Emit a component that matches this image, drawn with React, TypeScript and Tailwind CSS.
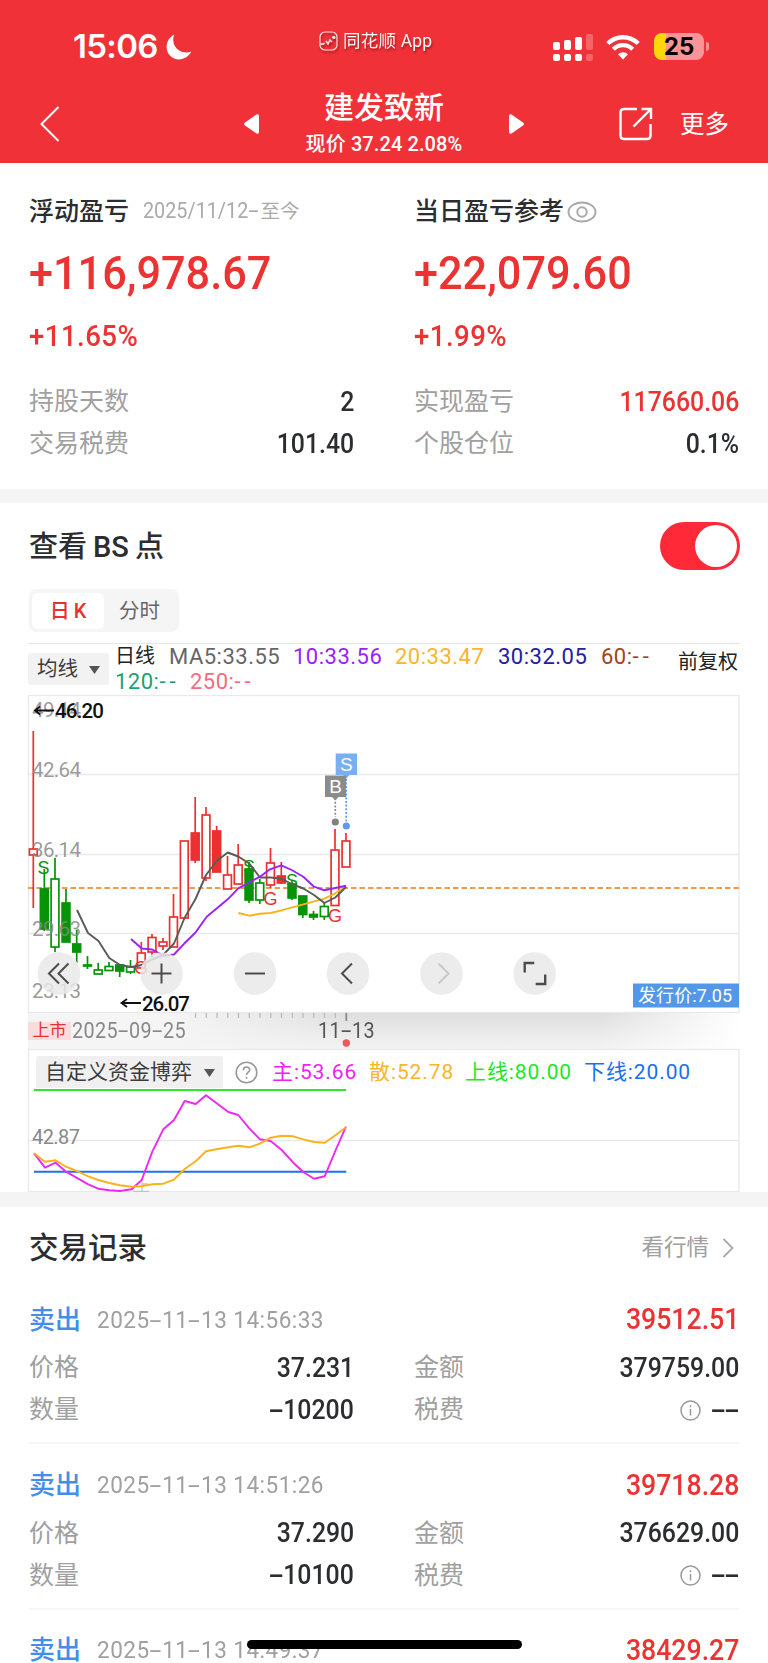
import type { ReactNode } from 'react'

type Trade = {
  time: string
  profit: string
  detail?: { price: string; amount: string; qty: string }
}

type Candle = {
  x: number
  high: number
  low: number
  top: number
  bottom: number
  up: boolean
  filled?: boolean
}

const RED = '#ec3031'
const GREEN = '#079307'

const trades: Trade[] = [
  {
    time: '2025-11-13 14:56:33',
    profit: '39512.51',
    detail: { price: '37.231', amount: '379759.00', qty: '-10200' },
  },
  {
    time: '2025-11-13 14:51:26',
    profit: '39718.28',
    detail: { price: '37.290', amount: '376629.00', qty: '-10100' },
  },
  { time: '2025-11-13 14:49:37', profit: '38429.27' },
]

const candles: Candle[] = [
  { x: 33.3, high: 731, low: 908, top: 849, bottom: 855, up: true },
  { x: 44.3, high: 869, low: 931, top: 889, bottom: 929, up: false, filled: true },
  { x: 55, high: 858, low: 952, top: 879, bottom: 947, up: false },
  { x: 66, high: 889, low: 942, top: 903, bottom: 942, up: false, filled: true },
  { x: 76.7, high: 930, low: 963, top: 944, bottom: 952, up: false, filled: true },
  { x: 87.5, high: 956, low: 969, top: 965, bottom: 966, up: false, filled: true },
  { x: 98.2, high: 963, low: 974, top: 970, bottom: 974, up: false },
  { x: 109, high: 962, low: 970, top: 966.5, bottom: 970.5, up: false },
  { x: 119.7, high: 964, low: 977, top: 965, bottom: 971, up: false, filled: true },
  { x: 130.5, high: 960, low: 974, top: 967, bottom: 972, up: false },
  { x: 141.3, high: 942, low: 968, top: 953, bottom: 968, up: true },
  { x: 152, high: 934, low: 957, top: 937.5, bottom: 952, up: true },
  { x: 163, high: 938, low: 950, top: 942, bottom: 946, up: true },
  { x: 173.5, high: 894, low: 947, top: 917, bottom: 947, up: true },
  { x: 184.3, high: 841, low: 918, top: 841, bottom: 918, up: true },
  { x: 195.2, high: 797, low: 863, top: 833, bottom: 860, up: true, filled: true },
  { x: 206, high: 807, low: 881, top: 815, bottom: 878, up: true },
  { x: 216.7, high: 826, low: 872, top: 831, bottom: 872, up: true, filled: true },
  { x: 227.5, high: 856, low: 889, top: 875, bottom: 889, up: true },
  { x: 238.2, high: 844, low: 884, top: 865, bottom: 884, up: true },
  { x: 249, high: 862, low: 903, top: 869, bottom: 900, up: false, filled: true },
  { x: 259.8, high: 879, low: 904, top: 883, bottom: 900, up: false },
  { x: 270.5, high: 848, low: 888, top: 863, bottom: 885, up: true },
  { x: 281.3, high: 862, low: 884, top: 876, bottom: 883, up: true, filled: true },
  { x: 292, high: 880, low: 900, top: 884, bottom: 898, up: false, filled: true },
  { x: 302.8, high: 896, low: 918, top: 896, bottom: 914.5, up: false, filled: true },
  { x: 313.5, high: 911, low: 920, top: 914.5, bottom: 917, up: false, filled: true },
  { x: 324.3, high: 903, low: 920, top: 906.5, bottom: 916.5, up: false },
  { x: 335, high: 829, low: 905, top: 850, bottom: 905.5, up: true },
  { x: 346, high: 833, low: 867, top: 841, bottom: 867, up: true },
]

const ma5 =
  '77,910 88,933 98.5,941 109.3,958 120,965 131.5,967 141.7,965 152,959.5 163,955 174,943.5 184.5,918 195.5,899 206,875 216.7,861 227.7,852.5 238.3,856.5 249.3,863.5 260,877.5 270.7,877.5 281.3,878.7 291.7,884 303.3,888.5 314,895 324.3,903 335.3,897.5 346,887'
const ma10 =
  '131,939 141.7,948.5 152.3,949.5 163.3,955.7 174,954.5 184.5,943.3 195.3,932.7 206.7,916.7 227.7,899.3 238.3,888.3 249.3,882.3 260,876.7 270,869.3 281.3,865.3 291.7,870 303.3,876.7 314,886.7 324.3,890.3 335.3,888 346,885.7'
const ma20 =
  '238.3,913 249.3,915.7 260,913.7 270.7,913 281.3,910.3 303.3,904.3 324.3,898.7 335.3,893.3 346,886'
const mainForce =
  '34,1153.3 45,1167.7 55.7,1162.7 66,1171.7 88.3,1184.3 98.3,1188.7 109.3,1190.3 120,1191 131.7,1189.3 141.7,1180 152.3,1151.7 163.3,1129.3 174,1120 184.7,1101 195.7,1104 206,1095.3 217.7,1104 228.3,1112 238.3,1115 249.3,1128.3 260,1139.3 270.7,1141 281.7,1150 293.3,1162.7 303.3,1172 314,1178.7 324.7,1176.3 335.7,1150 346,1126.7'
const retail =
  '34,1153.3 45,1161.7 55.7,1160.3 66,1166.7 76.7,1171 88.3,1176.3 98.3,1180 109.3,1183 120,1185.3 131.7,1186.7 141.7,1186.3 152.3,1184.3 163.3,1183.7 174,1179.7 184.7,1169 195.7,1161.3 206,1151.3 217.7,1149 228.3,1147.3 238.3,1145.7 249.3,1147.3 260,1143.7 270.7,1137.7 281.7,1135.7 293.3,1136.3 303.3,1139.3 314,1142 324.7,1142.7 335.7,1135 346,1127.3'

// Narrow numerals, hyphens are stretched to digit width
function Num({ children, className = '' }: { children: string; className?: string }) {
  return (
    <span className={`inline-block whitespace-pre scale-x-[0.92] ${className}`}>
      {children.split('-').map((part, i) => (
        <span key={i}>
          {i > 0 && <span className="inline-block w-[0.56em] scale-x-[1.9] text-center">-</span>}
          {part}
        </span>
      ))}
    </span>
  )
}

function StatusBar() {
  return (
    <div className="flex h-[84px] items-center pt-[9px] pl-[73px]">
      <span className="w-[86px] whitespace-nowrap font-['Inter'] text-[33px] font-semibold tracking-[-0.7px]">15:06</span>
      <svg className="ml-[7px] h-[26px] w-[26px]" viewBox="0 0 26 26" fill="white">
        <path d="M8.500 .5C3.600 2.700.6 7.800.6 13c0 7 5.500 12.400 12.400 12.400 5.400 0 10-3 12.200-7.800-1.600.6-3 .9-4.700.9C12.700 18.500 7.200 13 7.200 5.600c0-1.600.4-3.700 1.300-5.100z" />
      </svg>
      <div className="-mt-3 ml-[127px] flex w-[240px] items-center gap-[5px] drop-shadow-[1px_2px_1px_rgba(90,0,0,0.5)]">
        <svg className="h-5 w-[19px]" viewBox="0 0 19 20" fill="none" stroke="#ffe3e3" strokeWidth="1.200">
          <rect x="1" y="1" width="17" height="18" rx="5" />
          <path d="M1.500 12.500c1.500 1 3 .8 4-.5M7 10l2 3 2-4 2 2M13 6.500l2-.5v2" strokeWidth="1.600" />
          <circle cx="15" cy="6.500" r="1" fill="#fff" />
        </svg>
        <span className="whitespace-nowrap text-[17.5px] leading-6 tracking-[0.2px] text-red-50">同花顺 App</span>
      </div>
      <svg className="-ml-[6px] h-7 w-10" viewBox="0 0 40 28" fill="white">
        <rect x="0" y="9" width="7" height="8" rx="2" />
        <rect x="11" y="7" width="7" height="10" rx="2" />
        <rect x="22" y="4" width="7" height="13" rx="2" />
        <rect x="33" y="1" width="7" height="16" rx="2" opacity=".25" />
        <rect x="0" y="21" width="7" height="7" rx="2" />
        <rect x="11" y="21" width="7" height="7" rx="2" />
        <rect x="22" y="21" width="7" height="7" rx="2" />
        <rect x="33" y="21" width="7" height="7" rx="2" opacity=".25" />
      </svg>
      <svg className="ml-[13px] h-[26px] w-[34px]" viewBox="0 0 34 26" fill="none" stroke="white" strokeWidth="4.400">
        <path d="M1.800 9.500a21.500 21.500 0 0 1 30.400 0" />
        <path d="M7.300 15.200a13.700 13.700 0 0 1 19.400 0" />
        <path d="M17 25.500l-5-5.300a7.200 7.200 0 0 1 10 0z" fill="white" stroke="none" />
      </svg>
      <div className="ml-[14px] flex h-[27px] w-[50px] items-center justify-center rounded-[8px] bg-[linear-gradient(90deg,#ffd60a_12px,#fa9496_12px)] font-['Inter'] text-[24px] font-bold text-black">
        25
      </div>
      <div className="ml-[2px] h-[9px] w-[3px] rounded-r-full bg-[#fa9496]" />
    </div>
  )
}

function Header() {
  return (
    <header className="h-[163px] bg-[#f03238] text-white">
      <StatusBar />
      <div className="flex h-[79px] items-center">
        <svg className="ml-10 h-9 w-5" viewBox="0 0 20 36" fill="none" stroke="white" strokeWidth="2">
          <path d="M18.500 1L1.500 18l17 17" />
        </svg>
        <svg className="ml-[184px] h-5 w-[15px]" viewBox="0 0 15 20" fill="white">
          <path d="M12.500.5Q15-.5 15 2v16q0 2.500-2.500 1.500L1 11.500q-2-1.500 0-3z" />
        </svg>
        <div className="flex w-[250px] flex-col items-center">
          <h1 className="text-[30px] leading-10 font-medium">建发致新</h1>
          <p className="text-[20px] leading-8 font-medium tracking-[0.1px] whitespace-nowrap">现价 37.24 2.08%</p>
        </div>
        <svg className="h-5 w-[15px]" viewBox="0 0 15 20" fill="white">
          <path d="M2.500.5Q0-.5 0 2v16q0 2.500 2.500 1.500L14 11.500q2-1.500 0-3z" />
        </svg>
        <svg className="ml-[95px] h-[34px] w-[34px]" viewBox="0 0 34 34" fill="none" stroke="white" strokeWidth="2.400">
          <path d="M18 2H5Q1.500 2 1.500 5.500v23Q1.500 32 5 32h23q3.500 0 3.500-3.500V17" />
          <path d="M22.500 2H32v10M32 2L14.500 19.500" />
        </svg>
        <span className="ml-[27px] pt-[2px] text-[24.5px] leading-9">更多</span>
      </div>
    </header>
  )
}

function Row({ label, children }: { label: string; children: ReactNode }) {
  return (
    <div className="flex h-[42px] items-center justify-between pt-[2px]">
      <span className="text-[25px] text-[#a0a0a0]">{label}</span>
      <span className="flex items-center text-[27px] font-medium text-[#2c2d30]">{children}</span>
    </div>
  )
}

function Summary() {
  return (
    <section className="grid h-[326px] grid-cols-2 gap-x-[60px] px-[29px] pt-[27px] text-[#2c2d30]">
      <div>
        <div className="flex h-10 items-center pt-[3px] whitespace-nowrap">
          <h2 className="text-[25px] font-medium">浮动盈亏</h2>
          <span className="ml-[14px] text-[21.5px] text-[#aaa]">
            <Num className="origin-left">2025/11/12-</Num>
            <span className="-ml-[9px] text-[19.5px]">至今</span>
          </span>
        </div>
        <div className="flex h-[84px] items-center pt-[2px] text-[47px] font-medium text-[#ea3332]">
          <Num className="origin-left">+116,978.67</Num>
        </div>
        <div className="flex h-10 items-center pt-[2px] text-[30px] font-medium text-[#ea3332]">
          <Num className="origin-left tracking-[0.5px]">+11.65%</Num>
        </div>
        <div className="pt-[26px]">
          <Row label="持股天数">
            <Num className="origin-right">2</Num>
          </Row>
          <Row label="交易税费">
            <Num className="origin-right">101.40</Num>
          </Row>
        </div>
      </div>
      <div>
        <div className="flex h-10 items-center pt-[3px] whitespace-nowrap">
          <h2 className="text-[25px] font-medium">当日盈亏参考</h2>
          <svg className="ml-[3px] h-[22px] w-[30px]" viewBox="0 0 30 22" fill="none" stroke="#aaa" strokeWidth="2">
            <ellipse cx="15" cy="11" rx="13.500" ry="9.600" />
            <circle cx="15" cy="11" r="4.700" />
          </svg>
        </div>
        <div className="flex h-[84px] items-center pt-[2px] text-[47px] font-medium text-[#ea3332]">
          <Num className="origin-left">+22,079.60</Num>
        </div>
        <div className="flex h-10 items-center pt-[2px] text-[30px] font-medium text-[#ea3332]">
          <Num className="origin-left tracking-[0.5px]">+1.99%</Num>
        </div>
        <div className="pt-[26px]">
          <Row label="实现盈亏">
            <Num className="origin-right text-[#ea3332]">117660.06</Num>
          </Row>
          <Row label="个股仓位">
            <Num className="origin-right">0.1%</Num>
          </Row>
        </div>
      </div>
    </section>
  )
}

function RoundButton({ x, children, dim }: { x: number; children: ReactNode; dim?: boolean }) {
  return (
    <g transform={`translate(${x} 973.500)`} fill="none" stroke={dim ? '#c9c9c9' : '#4c4c4c'} strokeWidth="2">
      <circle r="21.300" fill="#e9e9e9" fillOpacity=".85" stroke="none" />
      {children}
    </g>
  )
}

function Chart() {
  return (
    <div className="relative h-[497px]">
      <svg className="block h-[497px] w-[768px]" viewBox="0 695 768 497" fontFamily="Roboto, sans-serif">
        <defs>
          <linearGradient id="band" x1="0" x2="0" y1="0" y2="1">
            <stop offset="0" stopColor="#dedede" />
            <stop offset="1" stopColor="#f3f3f3" />
          </linearGradient>
          <linearGradient id="bandLeft" x1="0" x2="1" y1="0" y2="0">
            <stop offset="0" stopColor="#f5f5f5" />
            <stop offset=".2" stopColor="#f5f5f5" />
            <stop offset=".45" stopColor="#f5f5f5" stopOpacity="0" />
            <stop offset=".8" stopColor="#fff" stopOpacity="0" />
            <stop offset="1" stopColor="#fff" />
          </linearGradient>
        </defs>

        <g stroke="#e9e9e9" strokeWidth="1.300" fill="none">
          <rect x="28.500" y="695.500" width="710.500" height="317" />
          <path d="M28 774.500H739M28 854.500H739M28 933.500H739" />
        </g>

        <path d="M28 888H739" stroke="#f2994a" strokeWidth="2" strokeDasharray="5.500 3" />

        {candles.map((c) => {
          const color = c.up ? RED : GREEN
          return (
            <g key={c.x} stroke={color} strokeWidth="1.700">
              <path d={`M${c.x} ${c.high}V${c.top}M${c.x} ${c.bottom}V${c.low}`} />
              <rect
                x={c.x - 3.9}
                y={c.top}
                width="7.800"
                height={c.bottom - c.top}
                fill={c.filled ? color : 'white'}
              />
            </g>
          )
        })}

        <g fontSize="20.500" fill="#888" fillOpacity=".85">
          <text x="32" y="717" textLength="49">49.14</text>
          <text x="32" y="777" textLength="49">42.64</text>
          <text x="32" y="857" textLength="49">36.14</text>
          <text x="32" y="936" textLength="49">29.63</text>
          <text x="32" y="998" textLength="49">23.13</text>
        </g>

        <g fontSize="18" textAnchor="middle" fontFamily="Liberation Sans, sans-serif">
          <g fill={GREEN}>
            <text x="43.500" y="874">S</text>
            <text x="249" y="873">S</text>
            <text x="292" y="887">S</text>
          </g>
          <g fill={RED}>
            <text x="141" y="974">G</text>
            <text x="270.500" y="905">G</text>
            <text x="335" y="922">G</text>
          </g>
        </g>

        <g fill="none" strokeWidth="1.900" strokeLinejoin="round">
          <polyline points={ma20} stroke="#fbb11c" />
          <polyline points={ma5} stroke="#5a5a5a" />
          <polyline points={ma10} stroke="#9b22f7" />
        </g>

        <g>
          <path d="M346.200 775V822" stroke="#5b9bea" strokeWidth="1.700" strokeDasharray="2 1.700" />
          <circle cx="346.300" cy="826" r="3.600" fill="#5b9bea" />
          <path d="M335.700 753.500H357V775H349.500L346.300 778.500L343 775H335.700z" fill="#78aef2" />
          <path d="M335.300 798V817" stroke="#888" strokeWidth="1.700" strokeDasharray="2 1.700" />
          <circle cx="335.300" cy="822" r="3.600" fill="#808080" />
          <path d="M325 775.500H346V797H338.500L335.300 800.500L332 797H325z" fill="#8b8b8b" />
          <g fill="white" fontSize="19" textAnchor="middle" fontFamily="Liberation Sans, sans-serif">
            <text x="346.300" y="771">S</text>
            <text x="335.500" y="793">B</text>
          </g>
        </g>

        <g fill="#111" stroke="#111" fontSize="20.500" fontWeight="500">
          <path d="M35 710.500H54M40 706.500L35 710.500L40 714.500" fill="none" strokeWidth="1.800" />
          <text x="55" y="718" textLength="49" stroke="none">46.20</text>
          <path d="M121.500 1003H141M127 999L121.500 1003L127 1007" fill="none" strokeWidth="1.800" />
          <text x="142" y="1010.500" textLength="48" stroke="none">26.07</text>
        </g>

        <RoundButton x={59}>
          <path d="M0 -10L-10 0L0 10M9.500 -10L-.5 0L9.500 10" />
        </RoundButton>
        <RoundButton x={161.500}>
          <path d="M-10 0H10M0 -10V10" />
        </RoundButton>
        <RoundButton x={255}>
          <path d="M-10 0H10" />
        </RoundButton>
        <RoundButton x={348}>
          <path d="M4 -10L-6 0L4 10" />
        </RoundButton>
        <RoundButton x={441.500} dim>
          <path d="M-3 -10L7 0L-3 10" />
        </RoundButton>
        <RoundButton x={534.700}>
          <path d="M-10 -1V-10.500H-.5M10.500 1V10.500H1" strokeWidth="2.400" />
        </RoundButton>

        <rect x="633" y="983.500" width="106" height="24" fill="#5398e8" />
        <text x="638" y="1002" fontSize="18" fill="white" fontFamily="Roboto, Noto Sans CJK SC, sans-serif" textLength="94">
          发行价:7.05
        </text>

        {/* date axis */}
        <rect x="28" y="1013" width="711" height="36" fill="url(#band)" />
        <rect x="28" y="1013" width="712" height="36" fill="url(#bandLeft)" />
        <path
          d="M195.500 1013v5M206.300 1013v5M217 1013v5M227.800 1013v5M238.500 1013v5M249.300 1013v5M260 1013v5M270.800 1013v5M281.500 1013v5M292.300 1013v5M303 1013v5M313.800 1013v5M324.500 1013v5M335.300 1013v5"
          stroke="#bbb"
          strokeWidth="1.300"
        />
        <path d="M346.300 1013v8" stroke="#888" strokeWidth="1.700" />
        <circle cx="346.300" cy="1043" r="3.700" fill="#ee5a5c" />

        {/* fund indicator */}
        <rect x="28.500" y="1049.500" width="710.500" height="142" fill="white" stroke="#e9e9e9" strokeWidth="1.300" />
        <path d="M28 1140.500H739" stroke="#e9e9e9" strokeWidth="1.300" />
        <text x="32" y="1143.500" fontSize="20" fill="#888" textLength="48">42.87</text>
        <path d="M142 1178V1191M142 1184h6M133 1191.300H149" stroke="#c4c4c4" strokeWidth="1.300" />
        <g fill="none" strokeWidth="1.900" strokeLinejoin="round">
          <path d="M34 1171.700H346.300" stroke="#1f6fee" strokeWidth="2" />
          <polyline points={mainForce} stroke="#ef28ef" />
          <polyline points={retail} stroke="#fbb11c" />
        </g>
      </svg>

      <div className="absolute top-[327px] left-7 flex h-[18px] w-[43px] items-center justify-center bg-[#fbdcdc] text-[17px] text-[#e93030]">
        上市
      </div>
      <div className="absolute top-[323px] left-[72px] text-[21.5px] leading-[26px] tracking-[0.4px] text-[#888]">
        <Num className="origin-left">2025-09-25</Num>
      </div>
      <div className="absolute top-[323px] left-[318px] text-[21.5px] leading-[26px] tracking-[0.4px] text-[#555]">
        <Num className="origin-left">11-13</Num>
      </div>

      <div className="absolute top-[361px] left-9 flex h-8 items-center text-[21px] whitespace-nowrap">
        <div className="flex h-8 w-[187px] items-center rounded-t-[3px] bg-[#f0f0f0] pt-[2px] pl-[9px] text-[21px] text-[#3b3b3b]">
          自定义资金博弈
          <svg className="ml-[12px] h-2 w-[11px]" viewBox="0 0 11 8" fill="#555">
            <path d="M0 0h11L5.500 8z" />
          </svg>
        </div>
        <svg className="ml-[12px] h-[23px] w-[23px]" viewBox="0 0 23 23" fill="none" stroke="#999" strokeWidth="1.600">
          <circle cx="11.500" cy="11.500" r="10.300" />
          <path d="M8.300 9.300q0-3.300 3.200-3.300t3.200 2.800q0 1.500-1.600 2.600t-1.600 2.600M11.500 15.700v2" />
        </svg>
        <div className="ml-[14px] flex pt-[2px] tracking-[0.9px]">
          <span className="w-[97px] text-[#f020f0]">主:53.66</span>
          <span className="w-[96px] text-[#fbb52a]">散:52.78</span>
          <span className="w-[119px] text-[#20e820]">上线:80.00</span>
          <span className="text-[#1a70ee]">下线:20.00</span>
        </div>
      </div>
      <div className="absolute top-[394px] left-[34px] h-[2px] w-[312px] bg-[#2de62d]" />
    </div>
  )
}

function BsPoints() {
  return (
    <section>
      <div className="flex h-[86px] items-center justify-between pr-7 pl-[29px]">
        <h2 className="pt-1 text-[29px] font-medium text-[#2c2d30]">
          查看<span className="mx-[6px]">BS</span>点
        </h2>
        <div className="flex h-12 w-20 items-center justify-end rounded-full bg-[#ff2938] pr-[3px]">
          <div className="h-[42px] w-[42px] rounded-full bg-white" />
        </div>
      </div>
      <div className="ml-[29px] flex h-[43px] w-[150px] items-center rounded-[7px] bg-[#f5f5f5] pl-[3px] text-[20px]">
        <div className="flex h-9 w-[72px] items-center justify-center gap-1 rounded-[6px] bg-white font-medium text-[#e93030]">
          <span>日</span>
          <span>K</span>
        </div>
        <span className="ml-[15px] pt-px text-[20.5px] text-[#666]">分时</span>
      </div>
      <div className="mx-7 mt-[11px] flex h-[52px] border-t border-[#e6e6e6] text-[22px] whitespace-nowrap">
        <div className="mt-[9px] flex h-8 w-[81px] items-center rounded-[3px] bg-[#f2f2f2] pt-px pl-[9px] text-[20.5px] text-[#3b3b3b]">
          均线
          <svg className="ml-[11px] h-2 w-[11px]" viewBox="0 0 11 8" fill="#555">
            <path d="M0 0h11L5.500 8z" />
          </svg>
        </div>
        <div className="ml-[6px] w-[563px]">
          <div className="flex h-[25px] items-center leading-[25px] tracking-[0.5px]">
            <span className="w-[54px] text-[20px] tracking-normal text-[#222]">日线</span>
            <span className="w-[124px] text-[#666]">MA5:33.55</span>
            <span className="w-[102px] text-[#9b22f7]">10:33.56</span>
            <span className="w-[103px] text-[#fbb52a]">20:33.47</span>
            <span className="w-[103px] text-[#2020a0]">30:32.05</span>
            <span className="text-[#a0451c]">
              60:<span className="tracking-[4px]">--</span>
            </span>
          </div>
          <div className="flex h-[25px] items-center leading-[25px] tracking-[0.5px]">
            <span className="w-[75px] text-[#1fa070]">
              120:<span className="tracking-[4px]">--</span>
            </span>
            <span className="text-[#f56b80]">
              250:<span className="tracking-[4px]">--</span>
            </span>
          </div>
        </div>
        <span className="pt-1 text-[20px] leading-[28px] text-[#222]">前复权</span>
      </div>
      <Chart />
    </section>
  )
}

function TradeItem({ trade }: { trade: Trade }) {
  return (
    <div className="px-[29px] pt-3">
      <div className="flex h-[55px] items-center pt-[3px]">
        <span className="text-[26px] font-medium text-[#438eea]">卖出</span>
        <Num className="ml-4 origin-left text-[24.5px] tracking-[0.5px] text-[#a0a0a0]">{trade.time}</Num>
        <Num className="ml-auto origin-right text-[29px] font-medium text-[#ea3332]">{trade.profit}</Num>
      </div>
      {trade.detail && (
        <div className="grid h-[98.3px] grid-cols-2 content-start gap-x-[60px] border-b-2 border-[#f6f6f6]">
          <Row label="价格">
            <Num className="origin-right">{trade.detail.price}</Num>
          </Row>
          <Row label="金额">
            <Num className="origin-right">{trade.detail.amount}</Num>
          </Row>
          <Row label="数量">
            <Num className="origin-right">{trade.detail.qty}</Num>
          </Row>
          <Row label="税费">
            <svg className="mr-[8px] h-[21px] w-[21px]" viewBox="0 0 21 21" fill="none" stroke="#999" strokeWidth="1.500">
              <circle cx="10.500" cy="10.500" r="9.500" />
              <path d="M10.500 9v6.500M10.500 5.300v2" />
            </svg>
            <Num className="origin-right">--</Num>
          </Row>
        </div>
      )}
    </div>
  )
}

export default function App() {
  return (
    <div className="relative h-[1663px] w-[768px] overflow-hidden bg-white font-['Roboto','Noto_Sans_CJK_SC',sans-serif]">
      <Header />
      <Summary />
      <div className="h-[14px] bg-[#f4f4f4]" />
      <BsPoints />
      <div className="h-[15px] bg-[#f4f4f4]" />
      <section>
        <div className="flex h-[72px] items-center justify-between pt-[10px] pr-[34px] pl-[29px]">
          <h2 className="text-[29.5px] font-medium text-[#2c2d30]">交易记录</h2>
          <div className="flex items-center text-[22.5px] text-[#a0a0a0]">
            看行情
            <svg className="ml-[13px] h-5 w-3" viewBox="0 0 12 20" fill="none" stroke="#aaa" strokeWidth="1.800">
              <path d="M1.500 1l9 9-9 9" />
            </svg>
          </div>
        </div>
        {trades.map((trade) => (
          <TradeItem key={trade.time} trade={trade} />
        ))}
      </section>
      <div className="absolute bottom-[14px] left-[247px] h-[9px] w-[275px] rounded-full bg-black" />
    </div>
  )
}
